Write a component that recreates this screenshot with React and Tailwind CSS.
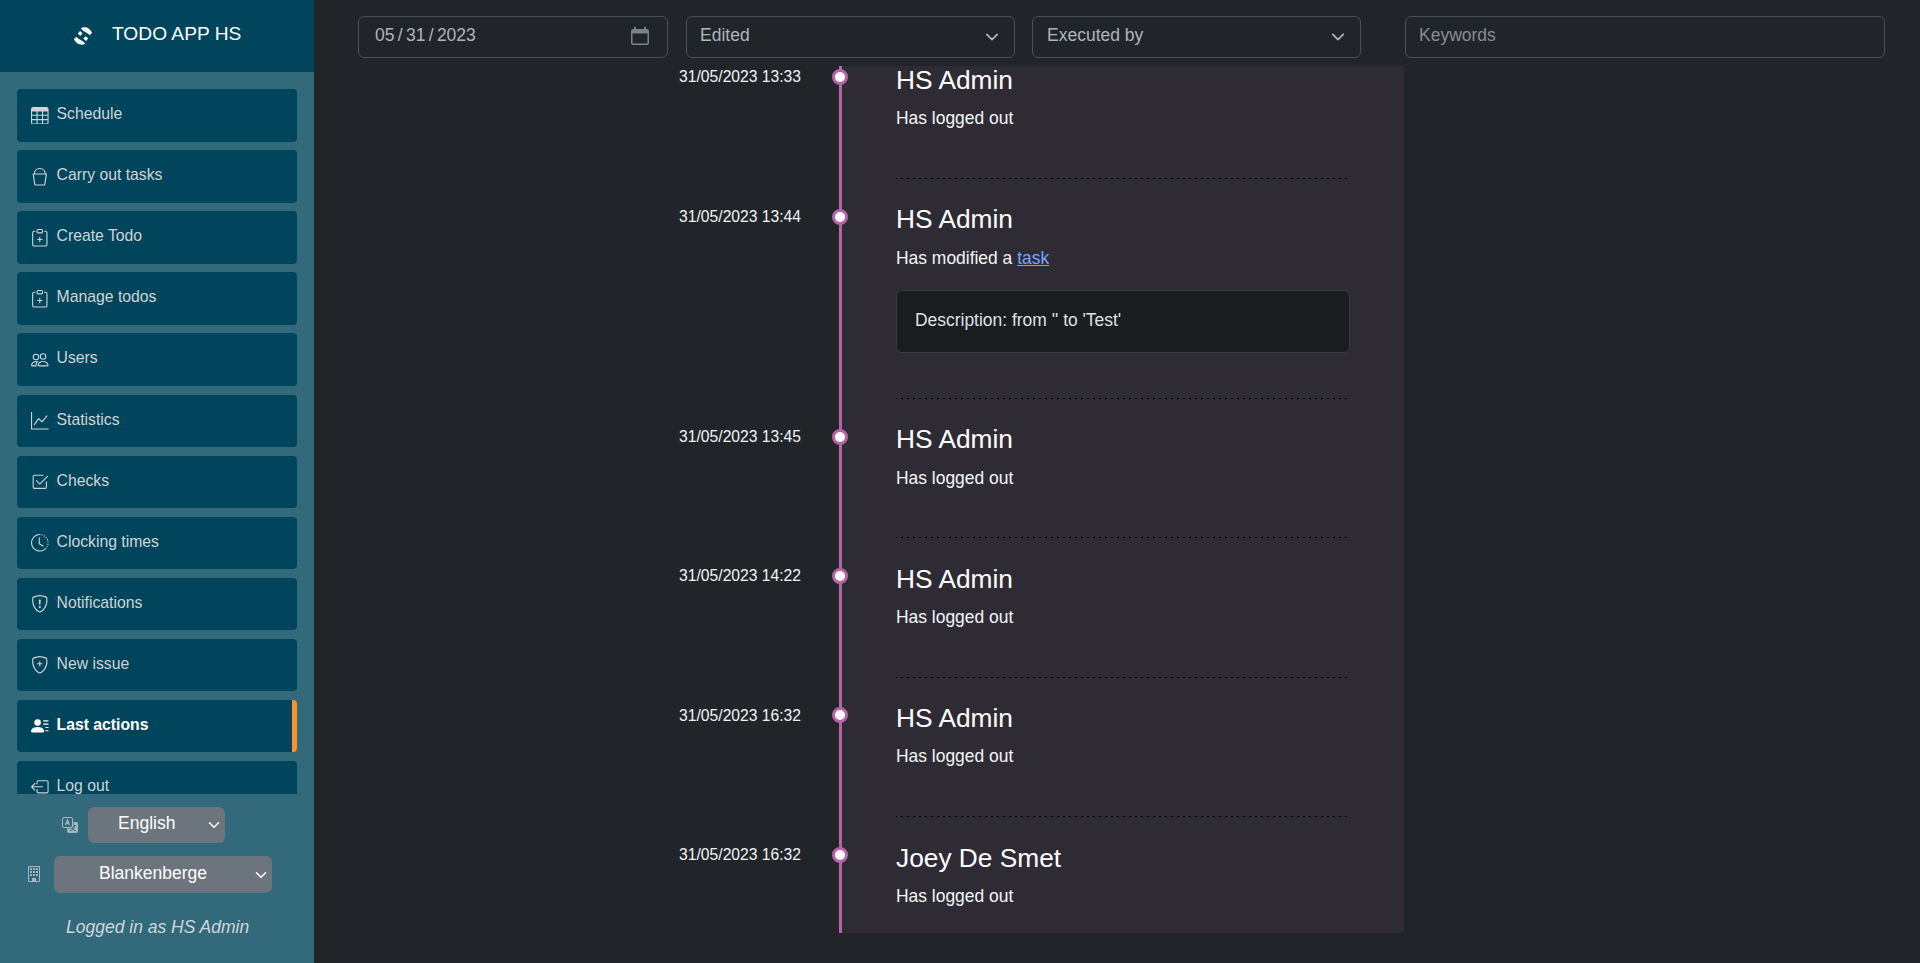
import {
  BsTable, BsBucket, BsClipboardPlus, BsPeople, BsGraphUp, BsCheck2Square, BsClockHistory,
  BsShieldExclamation, BsShieldPlus, BsPersonLinesFill, BsBoxArrowLeft, BsBuilding,
} from "react-icons/bs";

const NAV = [
  { label: "Schedule", Icon: BsTable },
  { label: "Carry out tasks", Icon: BsBucket },
  { label: "Create Todo", Icon: BsClipboardPlus },
  { label: "Manage todos", Icon: BsClipboardPlus },
  { label: "Users", Icon: BsPeople },
  { label: "Statistics", Icon: BsGraphUp },
  { label: "Checks", Icon: BsCheck2Square },
  { label: "Clocking times", Icon: BsClockHistory },
  { label: "Notifications", Icon: BsShieldExclamation },
  { label: "New issue", Icon: BsShieldPlus },
  { label: "Last actions", Icon: BsPersonLinesFill, active: true },
  { label: "Log out", Icon: BsBoxArrowLeft },
];

const ACTIONS = [
  { time: "31/05/2023 13:33", name: "HS Admin" },
  { time: "31/05/2023 13:44", name: "HS Admin", change: "Description: from '' to 'Test'" },
  { time: "31/05/2023 13:45", name: "HS Admin" },
  { time: "31/05/2023 14:22", name: "HS Admin" },
  { time: "31/05/2023 16:32", name: "HS Admin" },
  { time: "31/05/2023 16:32", name: "Joey De Smet" },
];

function Logo() {
  return (
    <svg viewBox="0 0 18 18" className="mt-1 size-[18px] fill-white">
      <path d="M6.800 1.200C9 -.2 12.500 -.1 14.800 1.700C16.500 3 17.500 4.300 18 6L15.600 8.200C14.500 6 9.500 5 6.800 1.200Z" />
      <path d="M11.200 16.800C9 18.200 5.500 18.100 3.200 16.300C1.500 15 .5 13.700 0 12L2.400 9.800C3.500 12 8.500 13 11.200 16.800Z" />
      <path d="M6.100 4 8.600 6.600 6.400 8.700 4 7.100Q4.400 5.200 6.100 4Z" />
      <path d="M11.900 14 9.400 11.400 11.600 9.300 14 10.900Q13.600 12.800 11.900 14Z" />
    </svg>
  );
}

function TranslateIcon({ className }) {
  return (
    <svg viewBox="0 0 16 16" className={className} fill="none" stroke="currentColor">
      <rect x=".5" y=".5" width="10" height="10" rx="1.500" />
      <path d="M3.600 8 5.500 3 7.400 8M4.200 6.400H6.800" strokeWidth="1.200" />
      <path d="M11.500 5H14a2 2 0 0 1 2 2v7a2 2 0 0 1-2 2H7a2 2 0 0 1-2-2v-2.500h5a1.500 1.500 0 0 0 1.500-1.500z" fill="currentColor" stroke="none" />
      <path d="M12 8.500H14.200M8 13.800c2.500-.8 4.200-2.800 5-5.200M10 11.500c1 1.200 2.400 2 4 2.300" stroke="#336a7b" />
    </svg>
  );
}

function Chevron({ className }) {
  return (
    <svg viewBox="0 0 16 16" className={className} fill="none" stroke="currentColor" strokeWidth="2" strokeLinecap="round" strokeLinejoin="round">
      <path d="m2 5 6 6 6-6" />
    </svg>
  );
}

function Sidebar() {
  return (
    <aside className="flex w-[314px] shrink-0 flex-col bg-[#336a7b]">
      <div className="flex h-[72px] shrink-0 items-start bg-[#00455c] pl-[74px] pt-[23px]">
        <Logo />
        <span className="ml-5 text-[19.200px] leading-[22px] text-white">TODO APP HS</span>
      </div>
      <nav className="flex h-[722px] flex-col gap-[8.800px] overflow-hidden px-[17px] pt-[17.300px]">
        {NAV.map(({ label, Icon, active }) => (
          <div
            key={label}
            className={
              "flex h-[52.260px] w-[280px] shrink-0 items-start rounded-[4px] bg-[#00455c] pl-[14px] " +
              (active ? "border-r-5 border-[#ff902b] font-bold text-white" : "text-[#d0d4d6]")
            }
          >
            <Icon className="mt-[17.600px] size-[17.600px] shrink-0" />
            <span className="ml-[8px] mt-[13px] text-[15.750px] leading-6">{label}</span>
          </div>
        ))}
      </nav>
      <div className="flex flex-col text-[17.500px] text-white">
        <div className="mt-[13px] flex h-9 items-center pl-[62px]">
          <TranslateIcon className="size-4 text-[#a5b8c1]" />
          <div className="ml-[10px] flex h-9 w-[137px] items-center rounded-[6px] bg-[#6c757d] pl-[30px]">
            <span className="-mt-[3px]">English</span>
            <Chevron className="ml-auto mr-[5px] size-3" />
          </div>
        </div>
        <div className="mt-[13px] flex h-[37px] items-center pl-[26px]">
          <BsBuilding className="-mt-[2px] size-4 text-[#a5b8c1]" />
          <div className="ml-[12px] flex h-[37px] w-[218px] items-center rounded-[6px] bg-[#6c757d] pl-[45px]">
            <span className="-mt-[3px]">Blankenberge</span>
            <Chevron className="ml-auto mr-[5px] size-3" />
          </div>
        </div>
        <div className="mt-[21px] pl-[66px] italic leading-[26px] text-[#ced6da]">Logged in as HS Admin</div>
      </div>
    </aside>
  );
}

function Filters() {
  const field = "flex h-[42px] shrink-0 items-start rounded-[6px] border border-[#495057] text-[17.500px] leading-[36px] ";
  return (
    <div className="flex h-[66px] shrink-0 items-start pl-11 pt-4 text-[#adb5bd]">
      <div className={field + "w-[310px] pl-[13px]"}>
        <span className="ml-[3px]">05</span>
        <span className="ml-[3.300px]">/</span>
        <span className="ml-[3.300px]">31</span>
        <span className="ml-[3.300px]">/</span>
        <span className="ml-[3.300px]">2023</span>
        <svg viewBox="0 0 18 18" className="ml-auto mr-[18px] mt-[10px] size-[18px] fill-[#7c8285]">
          <path fillRule="evenodd" d="M3 0h2v2h8V0h2v2h1a2 2 0 0 1 2 2v12a2 2 0 0 1-2 2H2a2 2 0 0 1-2-2V4a2 2 0 0 1 2-2h1zM1.500 6.500V15.500a1 1 0 0 0 1 1h13a1 1 0 0 0 1-1V6.500z" />
        </svg>
      </div>
      <div className={field + "ml-[18px] w-[329px] pl-[13px]"}>
        Edited
        <Chevron className="ml-auto mr-[15px] mt-[13px] size-[14px]" />
      </div>
      <div className={field + "ml-[17px] w-[329px] pl-[14px]"}>
        Executed by
        <Chevron className="ml-auto mr-[15px] mt-[13px] size-[14px]" />
      </div>
      <div className={field + "ml-11 w-[480px] pl-[13px] text-[#878d93]"}>Keywords</div>
    </div>
  );
}

function Action({ time, name, change, last }) {
  return (
    <div className="flex shrink-0">
      <div className="w-[244px] shrink-0 pt-[26px] text-right text-[15.660px] leading-6 text-[#f1f3f5]">{time}</div>
      <div className="z-10 ml-[31px] mt-[29.800px] size-4 shrink-0 rounded-full border-3 border-[#b565a7] bg-white" />
      <div className={"ml-12 flex w-[454px] flex-col pt-[24.600px] " + (change ? "h-[220px]" : "h-[139.400px]")}>
        <h2 className="text-[26.300px] leading-8 text-white">{name}</h2>
        <p className="mt-[9.200px] text-[17.450px] leading-[26px] text-[#f4f5f6]">
          {change ? <>Has modified a <a className="text-[#6ea8fe] underline">task</a></> : "Has logged out"}
        </p>
        {change && (
          <div className="mt-[19.200px] h-[63px] rounded-[6px] border border-[#353a3f] bg-[#1a1d20] pl-[18px] pt-4 text-[17.450px] leading-[26px] text-[#dee2e6]">
            {change}
          </div>
        )}
        {!last && (
          <div className="mt-auto h-px bg-[repeating-linear-gradient(90deg,#000_0_1px,transparent_1px_5px,#000_5px_6px)]" />
        )}
      </div>
    </div>
  );
}

export default function App() {
  return (
    <div className="flex h-[963px] w-[1920px] overflow-hidden bg-[#212529] font-['Liberation_Sans',sans-serif]">
      <Sidebar />
      <main className="flex min-w-0 flex-1 flex-col">
        <Filters />
        <div className="grid h-[867px] grid-cols-[525px_565px] overflow-hidden">
          <div className="col-start-2 row-start-1 h-[867px] border-l-3 border-[#b565a7] bg-[#2f2b35]" />
          <div className="col-span-2 col-start-1 row-start-1 -mt-[26.600px] flex flex-col pl-[243px]">
            {ACTIONS.map((a, i) => (
              <Action key={i} {...a} last={i === ACTIONS.length - 1} />
            ))}
          </div>
        </div>
      </main>
    </div>
  );
}
